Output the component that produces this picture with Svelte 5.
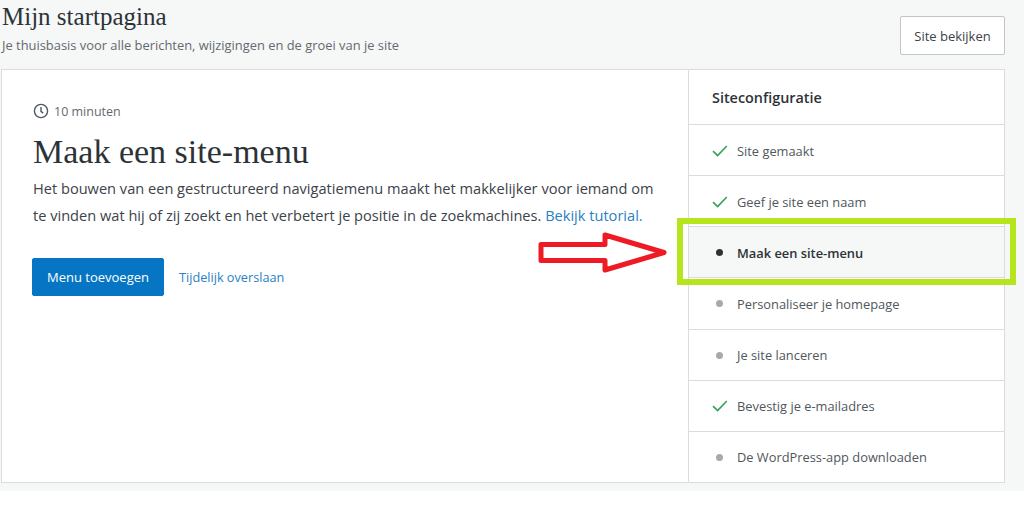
<script lang="ts">
  type Status = 'done' | 'current' | 'todo';

  const TASKS: { label: string; status: Status }[] = [
    { label: 'Site gemaakt', status: 'done' },
    { label: 'Geef je site een naam', status: 'done' },
    { label: 'Maak een site-menu', status: 'current' },
    { label: 'Personaliseer je homepage', status: 'todo' },
    { label: 'Je site lanceren', status: 'todo' },
    { label: 'Bevestig je e-mailadres', status: 'done' },
    { label: 'De WordPress-app downloaden', status: 'todo' },
  ];
</script>

<div class="page">
  <header class="head">
    <div>
      <h1>Mijn startpagina</h1>
      <p class="sub">Je thuisbasis voor alle berichten, wijzigingen en de groei van je site</p>
    </div>
    <button class="view-btn">Site bekijken</button>
  </header>

  <section class="card">
    <div class="main">
      <div class="time">
        <svg width="16" height="16" viewBox="0 0 16 16" fill="none" stroke="#50575e" stroke-width="1.4">
          <circle cx="8" cy="8" r="6.6" />
          <path d="M8 4v4.3l2.2 1.8" />
        </svg>
        <span>10 minuten</span>
      </div>
      <h2>Maak een site-menu</h2>
      <p class="desc">
        Het bouwen van een gestructureerd navigatiemenu maakt het makkelijker voor iemand om te vinden wat hij of zij zoekt en het verbetert je positie in de zoekmachines. <a href="#tutorial">Bekijk tutorial.</a>
      </p>
      <div class="actions">
        <button class="primary">Menu toevoegen</button>
        <a href="#skip" class="skip">Tijdelijk overslaan</a>
      </div>
    </div>

    <aside class="side">
      <div class="side-title">Siteconfiguratie</div>
      {#each TASKS as t}
        <div class="task" class:current={t.status === 'current'}>
          <span class="marker">
            {#if t.status === 'done'}
              <svg width="16" height="12" viewBox="0 0 16 12" fill="none" stroke="#2ea44f" stroke-width="1.6">
                <path d="M1 6.2l4.6 4.4L14.8 1" />
              </svg>
            {:else}
              <span class="dot"></span>
            {/if}
          </span>
          <span>{t.label}</span>
        </div>
      {/each}
    </aside>
  </section>

  <div class="highlight"></div>
  <svg class="arrow" width="140" height="50" viewBox="0 0 140 50" fill="#fff" stroke="#ed1c24" stroke-width="5" stroke-linejoin="round">
    <path d="M3 12.5H67V3L126 20.5L67 38V28.5H3Z" />
  </svg>
</div>

<style>
  :global(body) {
    margin: 0;
    background: #fff;
  }

  .page {
    position: relative;
    height: 491px;
    background: #f6f7f7;
    color: #2c3338;
    font-family: 'Open Sans', 'Noto Sans', sans-serif;
    box-sizing: border-box;
    padding-left: 1px;
    padding-right: 19px;
  }

  .head {
    height: 69px;
    display: flex;
    justify-content: space-between;
    align-items: flex-start;
    padding-left: 1px;
  }

  h1 {
    margin: 2px 0 0;
    font-family: 'Liberation Serif', serif;
    font-weight: 400;
    font-size: 25px;
    line-height: 29px;
    color: #2c3338;
  }

  .sub {
    margin: 6px 0 0;
    font-size: 12.9px;
    line-height: 17px;
    color: #646970;
  }

  .view-btn {
    margin-top: 16px;
    width: 105px;
    height: 39px;
    background: #fff;
    border: 1px solid #c3c4c7;
    border-radius: 2px;
    font-family: inherit;
    font-size: 13px;
    color: #3c434a;
    padding: 0;
  }

  .card {
    height: 414px;
    display: flex;
    background: #fff;
    border: 1px solid #dcdcde;
    box-sizing: border-box;
  }

  .main {
    width: 686px;
    box-sizing: border-box;
    padding: 32px 30px 0 31px;
  }

  .time {
    display: flex;
    align-items: center;
    gap: 5px;
    height: 18px;
    font-size: 12.5px;
    color: #646970;
  }

  h2 {
    margin: 11px 0 0;
    font-family: 'Liberation Serif', serif;
    font-weight: 400;
    font-size: 34px;
    line-height: 42px;
    color: #2c3338;
  }

  .desc {
    margin: 2px 0 0;
    font-size: 14.6px;
    line-height: 27px;
    color: #3c434a;
  }

  .desc a,
  .skip {
    color: #2b7fc0;
    text-decoration: none;
  }

  .actions {
    margin: 29px 0 0 -1px;
    display: flex;
    align-items: center;
    gap: 15px;
  }

  .primary {
    width: 132px;
    height: 38px;
    padding: 0;
    background: #0675c4;
    border: 1px solid #0675c4;
    border-radius: 2px;
    color: #fff;
    font-family: inherit;
    font-size: 13px;
  }

  .skip {
    font-size: 12.7px;
  }

  .side {
    flex: 1;
    display: flex;
    flex-direction: column;
    border-left: 1px solid #dcdcde;
  }

  .side-title {
    height: 54px;
    flex: none;
    display: flex;
    align-items: center;
    padding-left: 23px;
    font-size: 14.4px;
    font-weight: 600;
    color: #2c3338;
  }

  .task {
    flex: 1;
    display: flex;
    align-items: center;
    box-sizing: border-box;
    padding: 1px 0 0 23px;
    border-top: 1px solid #dcdcde;
    font-size: 12.85px;
    color: #50575e;
  }

  .task.current {
    background: #f6f7f7;
    color: #2c3338;
    font-weight: 600;
  }

  .marker {
    width: 25px;
    flex: none;
    display: flex;
    align-items: center;
    justify-content: flex-start;
  }

  .dot {
    width: 7px;
    height: 7px;
    margin-left: 4px;
    border-radius: 50%;
    background: #a7aaad;
  }

  .current .dot {
    background: #2c3338;
  }

  .highlight {
    position: absolute;
    left: 677px;
    top: 218px;
    width: 339px;
    height: 67px;
    box-sizing: border-box;
    border: 6px solid #b5e61d;
  }

  .arrow {
    position: absolute;
    left: 538px;
    top: 232px;
  }
</style>
